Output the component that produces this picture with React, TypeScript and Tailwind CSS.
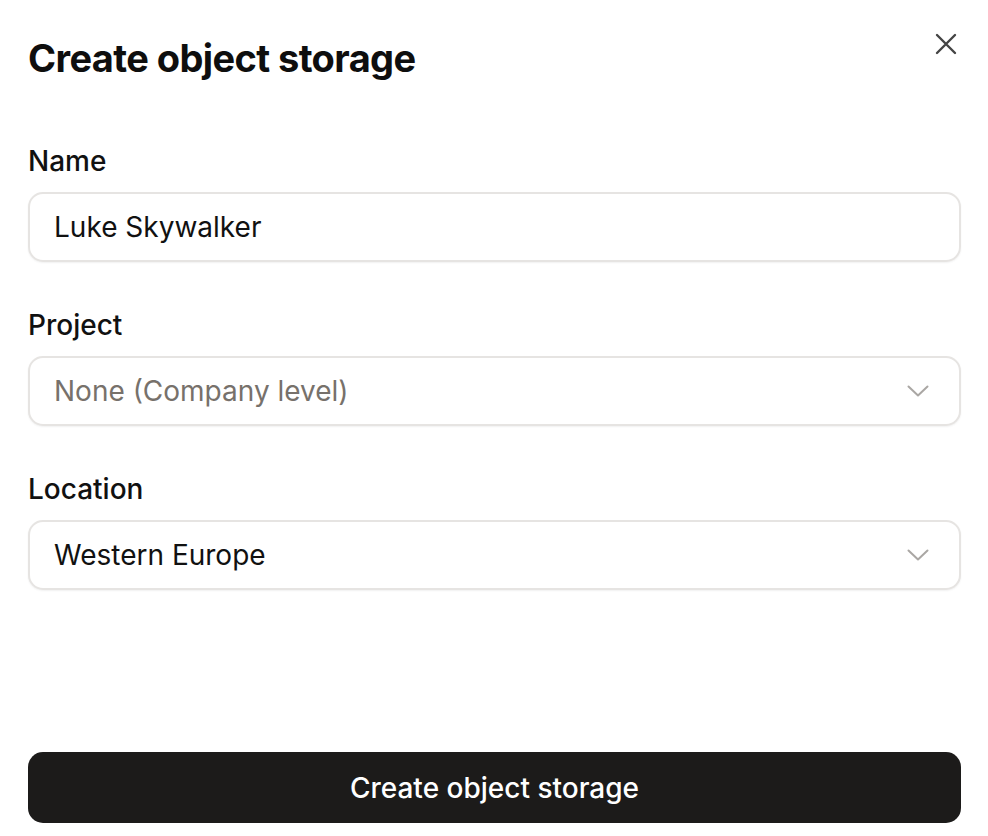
const font = { fontFamily: 'Inter, "Noto Sans", sans-serif' };

function Chevron() {
  return (
    <svg width="22" height="12" viewBox="0 0 22 12" fill="none" className="text-[#aaa7a4]">
      <path d="M1.5 1.5 11 10.5l9.5-9" stroke="currentColor" strokeWidth="2" strokeLinecap="round" strokeLinejoin="round" />
    </svg>
  );
}

function Field({ label, children }: { label: string; children: React.ReactNode }) {
  return (
    <div className="flex flex-col">
      <label className="text-[28px] font-medium leading-[34px] text-[#111] mb-[14px]">{label}</label>
      {children}
    </div>
  );
}

function SelectBox({ value, muted }: { value: string; muted?: boolean }) {
  return (
    <div className="h-[70px] rounded-[15px] border-2 border-[#e6e4e2] bg-white shadow-[0_1px_2px_rgba(0,0,0,0.06)] flex items-center justify-between pl-[24px] pr-[30px]">
      <span className={`text-[28px] ${muted ? 'text-[#77716b]' : 'text-[#111]'}`}>{value}</span>
      <Chevron />
    </div>
  );
}

export default function App() {
  return (
    <div className="w-[988px] h-[836px] bg-white overflow-hidden" style={font}>
      <div className="pl-[28px] pr-[27px] pt-[34px] flex flex-col h-full">
        <div className="flex items-start justify-between">
          <h1 className="text-[38px] font-bold leading-[48px] tracking-[-0.6px] text-[#0e0e0e]">Create object storage</h1>
          <button className="mt-[-1px] mr-[4px] text-[#444]">
            <svg width="22" height="22" viewBox="0 0 22 22" fill="none">
              <path d="M2 2l18 18M20 2 2 20" stroke="currentColor" strokeWidth="2.4" strokeLinecap="round" />
            </svg>
          </button>
        </div>

        <div className="flex flex-col gap-[46px] mt-[62px]">
          <Field label="Name">
            <div className="h-[70px] rounded-[15px] border-2 border-[#e6e4e2] bg-white shadow-[0_1px_2px_rgba(0,0,0,0.06)] flex items-center px-[24px]">
              <span className="text-[28px] text-[#111]">Luke Skywalker</span>
            </div>
          </Field>
          <Field label="Project">
            <SelectBox value="None (Company level)" muted />
          </Field>
          <Field label="Location">
            <SelectBox value="Western Europe" />
          </Field>
        </div>

        <button className="mt-auto mb-[13px] h-[71px] w-full rounded-[15px] bg-[#1c1b1a] text-white text-[28px] font-medium">
          Create object storage
        </button>
      </div>
    </div>
  );
}
